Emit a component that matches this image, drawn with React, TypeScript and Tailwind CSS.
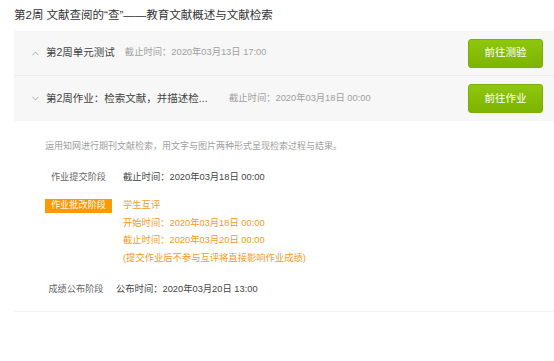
import type { ReactNode } from "react";

const font = { fontFamily: '"Liberation Sans", "Noto Sans CJK SC", sans-serif' };

function Caret({ up }: { up: boolean }) {
  return (
    <svg width="7" height="5" viewBox="0 0 7 5" className="shrink-0">
      <polyline
        points={up ? "0.5,4.2 3.5,1 6.5,4.2" : "0.5,0.8 3.5,4 6.5,0.8"}
        fill="none"
        stroke="#aaa"
        strokeWidth="1"
      />
    </svg>
  );
}

function GreenButton({ children }: { children: ReactNode }) {
  return (
    <button className="mr-[11px] flex h-[29px] w-[75px] shrink-0 items-center justify-center rounded-[3px] border border-[#7aae02] bg-gradient-to-b from-[#8fc60e] to-[#7db400] text-[10.5px] text-white">
      {children}
    </button>
  );
}

export default function App() {
  return (
    <div className="min-h-[361px] w-full bg-white" style={font}>
      <h1 className="pl-[14px] pt-[7px] text-[11.5px] leading-[16px] font-normal text-[#333]">
        第2周 文献查阅的“查”——教育文献概述与文献检索
      </h1>

      <div className="ml-[14px] mt-[8px] bg-[#f7f7f7]">
        <div className="flex h-[45px] items-center border-b border-[#ececec] pl-[18px]">
          <Caret up />
          <span className="ml-[7px] text-[10.5px] text-[#444]">第2周单元测试</span>
          <span className="ml-[10px] text-[9.3px] text-[#a0a0a0]">截止时间：2020年03月13日 17:00</span>
          <div className="flex-1" />
          <GreenButton>前往测验</GreenButton>
        </div>
        <div className="flex h-[45px] items-center pl-[18px]">
          <Caret up={false} />
          <span className="ml-[7px] w-[183px] shrink-0 text-[10.5px] text-[#444]">
            第2周作业：检索文献，并描述检...
          </span>
          <span className="text-[9.3px] text-[#a0a0a0]">截止时间：2020年03月18日 00:00</span>
          <div className="flex-1" />
          <GreenButton>前往作业</GreenButton>
        </div>
      </div>

      <div className="ml-[14px] pl-[31px] pt-[18px]">
        <p className="text-[9px] leading-[14px] text-[#a0a0a0]">
          运用知网进行期刊文献检索，用文字与图片两种形式呈现检索过程与结果。
        </p>

        <div className="mt-[17px] flex items-start">
          <div className="w-[67px] text-center text-[9.2px] leading-[14px] text-[#666]">作业提交阶段</div>
          <div className="ml-[11px] text-[9.3px] leading-[14px] text-[#444]">截止时间：2020年03月18日 00:00</div>
        </div>

        <div className="mt-[13px] flex items-start">
          <div className="mt-[2px] flex h-[14px] w-[67px] items-center justify-center bg-[#ff9900] text-[9.2px] text-white">
            作业批改阶段
          </div>
          <div className="ml-[11px] text-[9.3px] leading-[17.5px] text-[#f39a1e]">
            <div>学生互评</div>
            <div>开始时间：2020年03月18日 00:00</div>
            <div>截止时间：2020年03月20日 00:00</div>
            <div>(提交作业后不参与互评将直接影响作业成绩)</div>
          </div>
        </div>

        <div className="mt-[15px] flex items-start">
          <div className="w-[62px] text-center text-[9.2px] leading-[14px] text-[#666]">成绩公布阶段</div>
          <div className="ml-[9px] text-[9.3px] leading-[14px] text-[#444]">公布时间：2020年03月20日 13:00</div>
        </div>
      </div>

      <div className="ml-[14px] mt-[15px] h-px bg-[#f2f2f2]" />
    </div>
  );
}
